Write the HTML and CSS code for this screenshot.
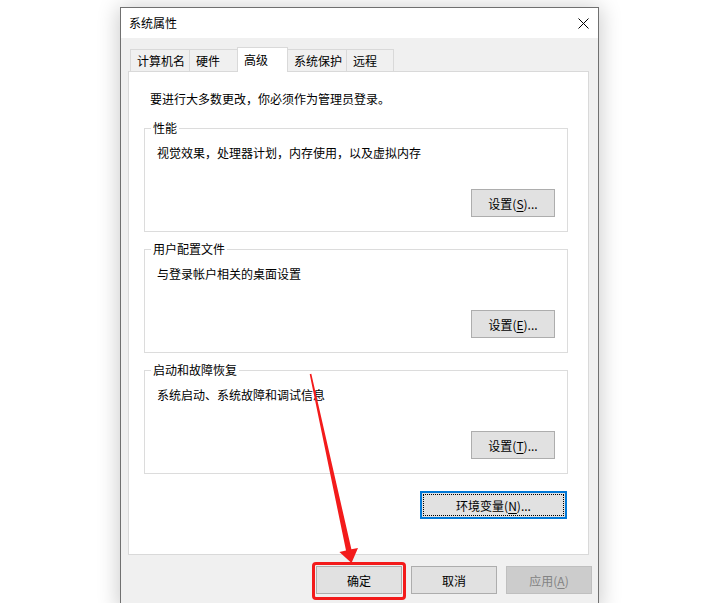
FILE: index.html
```html
<!DOCTYPE html>
<html lang="zh-CN">
<head>
    <meta charset="UTF-8">
    <meta name="viewport" content="width=device-width, initial-scale=1.0">
    <title>系统属性</title>
    <link rel="stylesheet" href="styles.css">
</head>
<body>
    <div class="dialog">
        <div class="titlebar">
            <span class="title">系统属性</span>
            <button class="close" aria-label="关闭">
                <svg width="11" height="11" viewBox="0 0 11 11">
                    <path d="M0.5 0.5 L10.5 10.5 M10.5 0.5 L0.5 10.5" stroke="#000" stroke-width="1" fill="none"/>
                </svg>
            </button>
        </div>

        <div class="dialog-body">
            <ul class="tabs">
                <li class="tab">计算机名</li>
                <li class="tab">硬件</li>
                <li class="tab active">高级</li>
                <li class="tab">系统保护</li>
                <li class="tab">远程</li>
            </ul>

            <div class="tab-panel">
                <p class="notice">要进行大多数更改，你必须作为管理员登录。</p>

                <fieldset class="group">
                    <legend>性能</legend>
                    <p class="group-desc">视觉效果，处理器计划，内存使用，以及虚拟内存</p>
                    <div class="group-actions">
                        <button class="btn">设置(<u>S</u>)...</button>
                    </div>
                </fieldset>

                <fieldset class="group">
                    <legend>用户配置文件</legend>
                    <p class="group-desc">与登录帐户相关的桌面设置</p>
                    <div class="group-actions">
                        <button class="btn">设置(<u>E</u>)...</button>
                    </div>
                </fieldset>

                <fieldset class="group">
                    <legend>启动和故障恢复</legend>
                    <p class="group-desc">系统启动、系统故障和调试信息</p>
                    <div class="group-actions">
                        <button class="btn">设置(<u>T</u>)...</button>
                    </div>
                </fieldset>

                <div class="panel-actions">
                    <button class="btn btn-env">环境变量(<u>N</u>)...</button>
                </div>
            </div>

            <div class="dialog-actions">
                <button class="btn btn-wide marked">确定</button>
                <button class="btn btn-wide">取消</button>
                <button class="btn btn-wide" disabled>应用(<u>A</u>)</button>
            </div>
        </div>
    </div>

    <!-- red pointer drawn over the dialog -->
    <svg class="pointer" width="710" height="603" viewBox="0 0 710 603">
        <polygon points="309.7,374.2 311.3,373.8 351.4,549.3 358.0,547.9 351.5,563 339.4,551.9 346.0,550.5" fill="#f31b1b"/>
    </svg>
</body>
</html>
```

FILE: styles.css
```css
html, body {
    height: 603px;
}
body {
    margin: 0;
    position: relative;
    overflow: hidden;
    background-color: #fff;
    font-family: "Noto Sans CJK SC", "Microsoft YaHei", sans-serif;
    font-size: 12px;
    line-height: 16px;
    color: #000;
}
.dialog {
    width: 479px;
    margin: 7px 0 0 120px;
    box-sizing: border-box;
    border: 1px solid #707070;
    background-color: #f0f0f0;
    box-shadow: 0 2px 20px 2px rgba(0, 0, 0, 0.2);
}
.titlebar {
    height: 30px;
    display: flex;
    align-items: center;
    padding-left: 8px;
    background-color: #fff;
}
.title {
    line-height: 30px;
}
.close {
    margin-left: auto;
    margin-right: 9px;
    padding: 0;
    border: none;
    background: none;
    display: flex;
}
.dialog-body {
    padding: 9px 0 12px 0;
}
.tabs {
    list-style: none;
    margin: 0 0 0 7px;
    padding: 0 0 0 2px;
    display: flex;
    align-items: flex-end;
    position: relative;
    z-index: 1;
}
.tab {
    box-sizing: border-box;
    min-width: 48px;
    height: 22px;
    line-height: 22px;
    padding: 0 4px 0 6px;
    margin-right: -1px;
    border: 1px solid #d9d9d9;
    border-bottom: none;
    background-color: #f0f0f0;
    white-space: nowrap;
}
.tab.active {
    min-width: 51px;
    height: 25px;
    padding-top: 1px;
    margin-bottom: -1px;
    background-color: #fff;
    position: relative;
    z-index: 2;
}
.tab:nth-child(2) {
    min-width: 49px;
}
.tab-panel {
    width: 461px;
    box-sizing: border-box;
    margin-left: 7px;
    padding: 19px 20px 35px 15px;
    border: 1px solid #d9d9d9;
    background-color: #fff;
}
.notice {
    margin: 0 0 13px 6px;
}
.group {
    margin: 0 0 9px 0;
    padding: 0 12px 14px 12px;
    border: 1px solid #dcdcdc;
    min-width: 0;
}
.group legend {
    margin-left: -6px;
    padding: 0 2px;
    line-height: 16px;
}
.group-desc {
    margin: 9px 0 0 0;
}
.group-actions {
    display: flex;
    justify-content: flex-end;
    margin-top: 28px;
}
.btn {
    box-sizing: border-box;
    width: 84px;
    height: 28px;
    padding: 0;
    border: 1px solid #adadad;
    background-color: #e1e1e1;
    font-family: inherit;
    font-size: 12px;
    color: #000;
}
.btn u {
    text-underline-offset: 2px;
}
.btn:disabled {
    background-color: #cccccc;
    border-color: #bfbfbf;
    color: #838383;
}
.panel-actions {
    display: flex;
    justify-content: flex-end;
    margin-top: 17px;
    padding-right: 1px;
}
.btn-env {
    width: 147px;
    border: 2px solid #0078d7;
    outline: 1px dotted #000;
    outline-offset: -4px;
}
.dialog-actions {
    display: flex;
    justify-content: flex-end;
    gap: 9px;
    margin-top: 11px;
    padding-right: 6px;
}
.btn-wide {
    width: 86px;
}
/* red frame marking the confirm button */
.marked {
    position: relative;
}
.marked::after {
    content: "";
    position: absolute;
    top: -5px;
    left: -5px;
    right: -5px;
    bottom: -7px;
    border: 3px solid #f31b1b;
    border-radius: 4px;
}
.pointer {
    position: absolute;
    top: 0;
    left: 0;
    pointer-events: none;
}
```
